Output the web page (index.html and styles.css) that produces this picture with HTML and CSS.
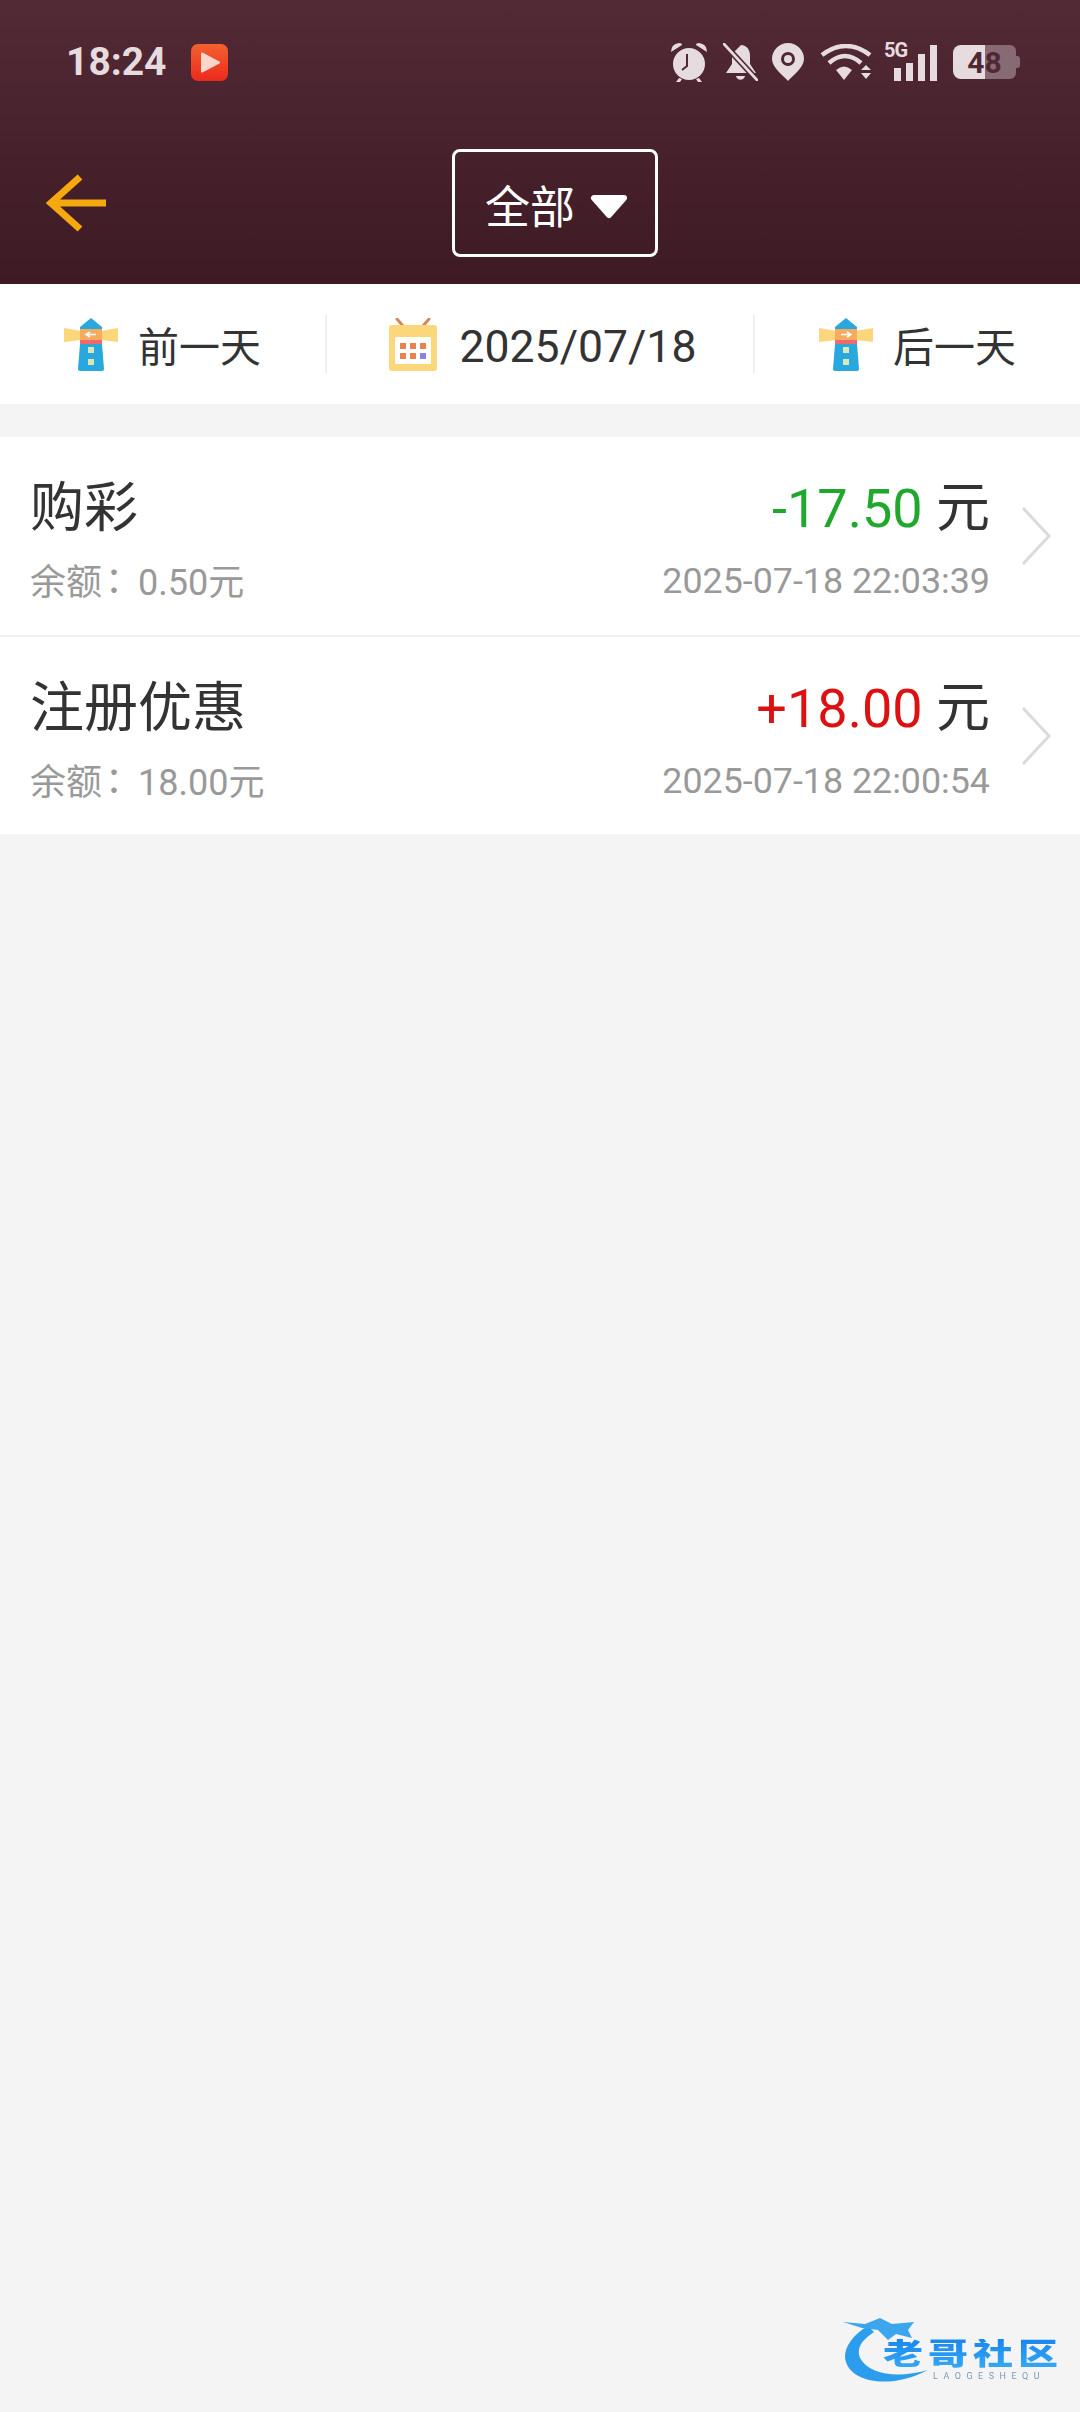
FILE: index.html
```html
<!DOCTYPE html>
<html lang="zh-CN">
<head>
    <meta charset="UTF-8">
    <meta name="viewport" content="width=device-width, initial-scale=1.0">
    <title>账户明细</title>
    <link rel="stylesheet" href="styles.css">
</head>
<body>
    <header class="top">
        <div class="status-bar">
            <span class="clock">18:24</span>
            <svg class="app-badge" viewBox="0 0 37 37">
                <defs>
                    <linearGradient id="badgeFill" x1="0" y1="0" x2="0" y2="1">
                        <stop offset="0" stop-color="#f2612f"/>
                        <stop offset="1" stop-color="#ec2a1c"/>
                    </linearGradient>
                </defs>
                <rect width="37" height="37" rx="7" fill="url(#badgeFill)"/>
                <path d="M11 9.500 L28 18.500 L11 27.500 Z" fill="#fbd6cb" stroke="#fbd6cb" stroke-width="2" stroke-linejoin="round"/>
            </svg>
            <div class="status-icons">
                <!-- alarm -->
                <svg class="ic-alarm" viewBox="0 0 38 40">
                    <circle cx="19" cy="22" r="16" fill="#e6dbdf"/>
                    <path d="M1 10 Q1 2 9 1 Q12 1 12 3 Z M37 10 Q37 2 29 1 Q26 1 26 3 Z" fill="#e6dbdf"/>
                    <path d="M9 36 L6 40 H10 L12 37 M29 36 L32 40 H28 L26 37" fill="#e6dbdf"/>
                    <path d="M17 12 V24 L12 28" fill="none" stroke="#4f2833" stroke-width="2"/>
                </svg>
                <!-- muted bell -->
                <svg class="ic-bell" viewBox="0 0 35 38">
                    <path d="M18 2 C24 2 27 7 27 13 V21 L33 30 H3 L9 21 V11 Z" fill="#e6dbdf"/>
                    <path d="M13 33 H22 C21 38 14 38 13 33 Z" fill="#e6dbdf"/>
                    <path d="M1 1 L34 37" stroke="#4f2833" stroke-width="6"/>
                    <path d="M1 1 L34 37" stroke="#e6dbdf" stroke-width="2.600" stroke-linecap="round"/>
                </svg>
                <!-- location -->
                <svg class="ic-pin" viewBox="0 0 32 38">
                    <path d="M16 38 C12 33 0 25 0 16 A16 16 0 0 1 32 16 C32 25 20 33 16 38 Z" fill="#e6dbdf"/>
                    <circle cx="16" cy="16" r="5.500" fill="none" stroke="#4f2833" stroke-width="3"/>
                </svg>
                <!-- wifi -->
                <svg class="ic-wifi" viewBox="0 0 52 36">
                    <path d="M2 11 Q26 -7 50 11" fill="none" stroke="#e6dbdf" stroke-width="4.500"/>
                    <path d="M9 19 Q25 5 41 19" fill="none" stroke="#e6dbdf" stroke-width="4.500"/>
                    <path d="M16 26 Q24 19 32 26 L24 36 Z" fill="#e6dbdf"/>
                    <path d="M41 26 L46 21 L51 26 Z M41 29 H51 L46 35 Z" fill="#e6dbdf"/>
                </svg>
                <!-- mobile signal -->
                <div class="signal">
                    <span class="net">5G</span>
                    <span class="bar bar1"></span>
                    <span class="bar bar2"></span>
                    <span class="bar bar3"></span>
                    <span class="bar bar4"></span>
                </div>
                <div class="battery"><span>48</span></div>
            </div>
        </div>
        <div class="toolbar">
            <svg class="back" viewBox="0 0 62 62">
                <path d="M34 5 L5 31 L34 57 M5 31 H60" fill="none" stroke="#f5a90f" stroke-width="7"/>
            </svg>
            <div class="type-select">
                <span class="type-label">全部</span>
                <svg class="caret" viewBox="0 0 38 25">
                    <path d="M4 4 H34 L19 21 Z" fill="#fff" stroke="#fff" stroke-width="6" stroke-linejoin="round"/>
                </svg>
            </div>
        </div>
    </header>

    <nav class="date-bar">
        <div class="date-cell prev">
            <svg class="tower" viewBox="0 0 54 54">
                <path d="M0 11 L17 14 V23 L0 25 Z M54 11 L37 14 V23 L54 25 Z" fill="#fbd67a"/>
                <path d="M16 13 V10 L27 1 L38 10 V13 Z" fill="#29a8e0"/>
                <rect x="16" y="12" width="22" height="11" fill="#f7ab5e"/>
                <rect x="16" y="23" width="22" height="4" fill="#ef6a6a"/>
                <path d="M16 27 H38 L40 52 Q40 54 38 54 H16 Q14 54 14 52 Z" fill="#29a8e0"/>
                <rect x="24" y="30" width="6" height="6" fill="#d9e8b4"/>
                <rect x="24" y="42" width="6" height="6" fill="#d9e8b4"/>
                <path d="M32 17.500 H23 M26 15 L22 17.500 L26 20" fill="none" stroke="#fff" stroke-width="1.500"/>
            </svg>
            <span>前一天</span>
        </div>
        <div class="date-cell current">
            <svg class="calendar" viewBox="0 0 48 53">
                <path d="M8 1 L14 8 M40 1 L34 8" stroke="#d4875c" stroke-width="3" stroke-linecap="round"/>
                <rect y="7" width="48" height="46" rx="3" fill="#fbd67a"/>
                <rect x="6" y="19" width="36" height="27" rx="1" fill="#fff"/>
                <g fill="#e8834f">
                    <rect x="11" y="25" width="6" height="6"/>
                    <rect x="21" y="25" width="6" height="6"/>
                    <rect x="31" y="25" width="6" height="6"/>
                    <rect x="11" y="35" width="6" height="6"/>
                    <rect x="21" y="35" width="6" height="6"/>
                </g>
                <rect x="31" y="35" width="6" height="6" fill="#8a80e8"/>
            </svg>
            <span class="date-text">2025/07/18</span>
        </div>
        <div class="date-cell next">
            <svg class="tower" viewBox="0 0 54 54">
                <path d="M0 11 L17 14 V23 L0 25 Z M54 11 L37 14 V23 L54 25 Z" fill="#fbd67a"/>
                <path d="M16 13 V10 L27 1 L38 10 V13 Z" fill="#29a8e0"/>
                <rect x="16" y="12" width="22" height="11" fill="#f7ab5e"/>
                <rect x="16" y="23" width="22" height="4" fill="#ef6a6a"/>
                <path d="M16 27 H38 L40 52 Q40 54 38 54 H16 Q14 54 14 52 Z" fill="#29a8e0"/>
                <rect x="24" y="30" width="6" height="6" fill="#d9e8b4"/>
                <rect x="24" y="42" width="6" height="6" fill="#d9e8b4"/>
                <path d="M22 17.500 H31 M28 15 L32 17.500 L28 20" fill="none" stroke="#fff" stroke-width="1.500"/>
            </svg>
            <span>后一天</span>
        </div>
    </nav>

    <ul class="record-list">
        <li class="record">
            <div class="record-left">
                <div class="record-title">购彩</div>
                <div class="record-sub">余额<span class="colon" lang="zh-TW">：</span>0.50元</div>
            </div>
            <div class="record-right">
                <div class="record-title"><span class="out">-17.50</span> 元</div>
                <div class="record-sub">2025-07-18 22:03:39</div>
            </div>
            <svg class="chevron" viewBox="0 0 30 60">
                <path d="M2 2 L28 30 L2 58" fill="none" stroke="#dadada" stroke-width="3"/>
            </svg>
        </li>
        <li class="record">
            <div class="record-left">
                <div class="record-title">注册优惠</div>
                <div class="record-sub">余额<span class="colon" lang="zh-TW">：</span>18.00元</div>
            </div>
            <div class="record-right">
                <div class="record-title"><span class="in">+18.00</span> 元</div>
                <div class="record-sub">2025-07-18 22:00:54</div>
            </div>
            <svg class="chevron" viewBox="0 0 30 60">
                <path d="M2 2 L28 30 L2 58" fill="none" stroke="#dadada" stroke-width="3"/>
            </svg>
        </li>
    </ul>

    <div class="site-mark">
        <svg class="dragon" viewBox="0 0 90 80">
            <path d="M28 16 C10 26 2 42 6 52 C12 72 50 80 88 60 C60 68 30 66 20 48 C16 38 22 30 34 22 Z" fill="#2c9cec"/>
            <path d="M3 12 L25 14 L40 8 L52 14 L74 12 L68 20 L72 28 L56 24 L48 30 L38 20 L22 18 Z" fill="#3ba6ee"/>
        </svg>
        <div class="mark-name">老哥社区</div>
        <div class="mark-sub">LAOGESHEQU</div>
    </div>
</body>
</html>
```

FILE: styles.css
```css
* {
    box-sizing: border-box;
}
body {
    margin: 0;
    min-height: 2412px;
    position: relative;
    background: #f4f4f4;
    color: #333;
    font-family: Roboto, "Noto Sans CJK SC", sans-serif;
}
.top {
    height: 284px;
    background: linear-gradient(#522a36, #3d1a24);
}
.status-bar {
    height: 120px;
    padding: 4px 64px 0 66px;
    display: flex;
    align-items: center;
    color: #e6dbdf;
}
.clock {
    font-size: 39px;
    font-weight: 700;
    width: 125px;
}
.app-badge {
    width: 37px;
    height: 37px;
}
.status-icons {
    margin-left: auto;
    display: flex;
    align-items: center;
}
.ic-alarm {
    width: 38px;
    height: 40px;
    margin-right: 15px;
}
.ic-bell {
    width: 35px;
    height: 38px;
    margin-right: 14px;
}
.ic-pin {
    width: 32px;
    height: 38px;
    margin-right: 16px;
}
.ic-wifi {
    width: 52px;
    height: 36px;
    margin-right: 12px;
}
.signal {
    width: 53px;
    height: 38px;
    margin-right: 16px;
    position: relative;
    display: flex;
    align-items: flex-end;
    justify-content: flex-end;
    gap: 5px;
}
.net {
    position: absolute;
    left: 0;
    top: -3px;
    font-size: 20px;
    font-weight: 700;
    letter-spacing: -1px;
    line-height: 20px;
}
.bar {
    width: 7px;
    background: #e6dbdf;
}
.bar1 { height: 13px; }
.bar2 { height: 18px; }
.bar3 { height: 27px; }
.bar4 { height: 36px; }
.battery {
    width: 63px;
    height: 34px;
    position: relative;
    border-radius: 8px 6px 6px 8px;
    background: linear-gradient(90deg, #e6dbdf 0 32px, #876a74 32px);
    display: flex;
    align-items: center;
    justify-content: center;
    color: #4f2833;
    font-size: 30px;
    font-weight: 700;
}
.battery::after {
    content: "";
    position: absolute;
    right: -4px;
    top: 11px;
    width: 4px;
    height: 12px;
    border-radius: 0 3px 3px 0;
    background: #876a74;
}
.toolbar {
    height: 164px;
    padding: 2px 0 0 46px;
    display: flex;
    align-items: center;
}
.back {
    width: 62px;
    height: 62px;
}
.type-select {
    margin-left: 344px;
    width: 206px;
    height: 108px;
    padding-left: 3px;
    border: 3px solid #fff;
    border-radius: 8px;
    display: flex;
    align-items: center;
    justify-content: center;
    gap: 15px;
    color: #fff;
    font-size: 45px;
}
.type-label {
    padding-top: 2px;
}
.caret {
    width: 38px;
    height: 25px;
    margin-top: 6px;
}
.date-bar {
    height: 120px;
    background: #fff;
    display: flex;
    margin-bottom: 33px;
    font-size: 41px;
    align-items: center;
}
.date-cell {
    height: 59px;
    display: flex;
    align-items: center;
    justify-content: center;
    gap: 20px;
}
.prev {
    width: 325px;
}
.current {
    width: 430px;
    gap: 23px;
    padding-left: 5px;
    border-left: 2px solid #f0f0f0;
    border-right: 2px solid #f0f0f0;
}
.next {
    width: 325px;
}
.tower {
    width: 54px;
    height: 54px;
}
.calendar {
    width: 48px;
    height: 53px;
}
.date-text {
    font-size: 44.500px;
    padding-top: 5px;
}
.record-list {
    list-style: none;
    margin: 0;
    padding: 0;
    background: #fff;
}
.record {
    height: 200px;
    padding: 12px 29px 0 30px;
    display: flex;
    align-items: center;
    border-bottom: 2px solid #f2f2f2;
}
.record:last-child {
    height: 197px;
    border-bottom: 0;
}
.record-left {
    flex: 1;
}
.record-right {
    text-align: right;
}
.record-title {
    font-size: 54px;
    line-height: 60px;
    margin-bottom: 18px;
}
.record-right .record-title {
    margin-top: -2px;
    margin-bottom: 20px;
}
.record-sub {
    font-size: 36px;
    line-height: 44px;
    color: #999;
}
.record-right .record-sub {
    font-size: 35.800px;
}
/* proportional colon, the spare width goes after it */
.colon {
    font-family: "Noto Sans CJK TC", sans-serif;
    font-feature-settings: "palt";
    margin: 0 15px 0 3px;
}
.out {
    color: #1fa82c;
}
.in {
    color: #dd1111;
}
.chevron {
    width: 30px;
    height: 60px;
    margin-left: 31px;
    margin-top: -12px;
}
/* forum logo in the corner, slightly soft */
.site-mark {
    position: absolute;
    right: 14px;
    bottom: 27px;
    width: 226px;
    height: 75px;
    filter: blur(0.6px);
}
.dragon {
    position: absolute;
    left: 0;
    top: 0;
    width: 90px;
    height: 80px;
}
.mark-name {
    position: absolute;
    left: 43px;
    top: 24px;
    font-size: 40px;
    line-height: 40px;
    font-weight: 900;
    letter-spacing: 5px;
    white-space: nowrap;
    transform: scaleY(0.75);
    background: linear-gradient(#1a86ee, #35aaf5);
    -webkit-background-clip: text;
    background-clip: text;
    color: transparent;
}
.mark-sub {
    position: absolute;
    left: 93px;
    top: 61px;
    font-size: 9px;
    line-height: 11px;
    letter-spacing: 5.500px;
    color: #7a9ab8;
    white-space: nowrap;
}
```
